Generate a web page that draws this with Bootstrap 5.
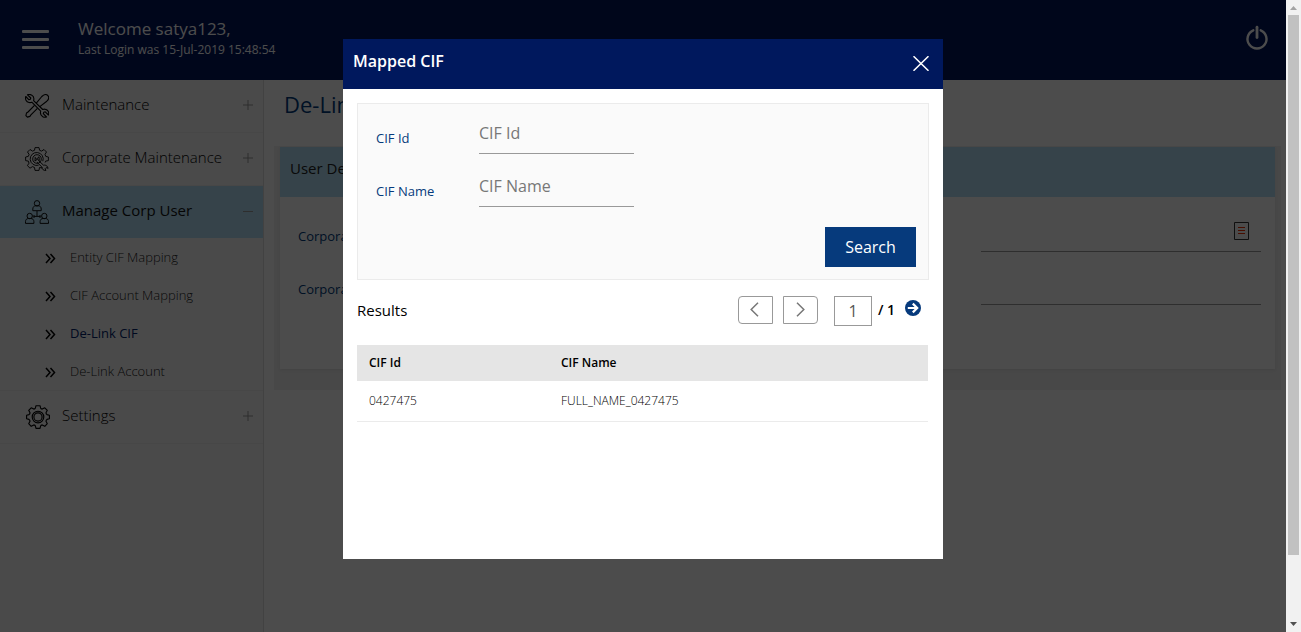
<!DOCTYPE html>
<html lang="en">
<head>
<meta charset="utf-8">
<title>De-Link CIF</title>
<link href="https://cdn.jsdelivr.net/npm/bootstrap@5.3.0/dist/css/bootstrap.min.css" rel="stylesheet">
<style>
body{font-family:"Open Sans",sans-serif;font-size:13px;height:632px;overflow:hidden;background:#fff}
svg{display:block;flex:none}
.topbar{height:80px;background:#00145c;color:#fff;padding:0 17px 0 22px}
.hello{font-size:17px;line-height:22px;margin-top:-4px;padding-bottom:1px}
.last-login{font-size:12px;line-height:18px}
.side{width:264px;background:#f7f7f7;border-right:1px solid #ddd}
.side-item{height:53px;padding:0 10px 4px 25px;border-bottom:1px solid #ededed;font-size:15px;font-weight:300;color:#000}
.side-item svg.pic{width:24px;height:24px;margin:4px 13px 0 0}
.side-item svg.sign{margin-top:2px}
.side-item svg.gear{margin:4px 12px 0 1px}
.side-item.selected{background:#b5e1f7;font-weight:400;border-color:#b5e1f7;height:52px;padding-bottom:2px;margin-bottom:1px;color:#111}
.side-item.selected svg.pic{margin-top:2px}
.side-item.selected svg.sign{margin-top:0}
.sub-item{height:38px;padding-left:45px;gap:14px;font-weight:300;color:#222}
.sub-item svg{color:#000;margin-top:1px}
.sub-item.current{font-weight:400;color:#00246b}
.sub-item.last-sub{border-bottom:1px solid #ededed}
.stroke{fill:none;stroke:currentColor}
.page-title{font-size:22px;line-height:30px;color:#003a7c;padding:9px 0 0 10px;height:66px}
.panel-outer{background:#f0f0f0;padding:1px 6px 21px;height:244px}
.panel-in{background:#fff;height:222px;box-shadow:0 1px 3px rgba(0,0,0,.08)}
.panel-head{height:50px;background:#b5e1f7;padding:9px 10px;font-size:15px;line-height:24px;color:#222}
.panel-row{height:53px;padding:0 14px 0 18px;color:#003a7c}
.panel-row .lbl{width:683px;padding-top:27px;line-height:24px}
.panel-row .val{height:55px;border-bottom:1px solid #999;padding:0 12px 11px 0}
.dim{background:rgba(0,0,0,.7);z-index:5}
.dialog{z-index:6;left:343px;top:39px;width:600px;height:520px;background:#fff}
.dialog-head{height:50px;background:#00185d;color:#fff;font-size:16px;font-weight:600;padding:0 14px 0 10px}
.dialog-head span{margin-top:-6px}
.search-box{height:177px;width:572px;background:#fafafa;border:1px solid #ebebeb;padding:0 12px 0 18px}
.frow{height:53px;color:#063a7c}
.frow label{width:103px;padding-top:22px;line-height:24px}
.frow input{width:155px;height:50px;border:0;border-bottom:1px solid #999;border-radius:0;background:none;padding:8px 0 0;font-size:16px;color:#777;outline:0}
.frow input::placeholder{color:#777;opacity:1}
.btn-search{width:91px;height:40px;background:#063a7c;color:#fff;border:0;border-radius:0;font-size:16px;padding:0}
.pg{width:35px;height:28px;border:1px solid #999;color:#777;background:#fff}
.pg svg{margin:-1px 2px 0 0}
.pg.prev{border-radius:4px 0 0 4px}
.pg.next{border-radius:0 4px 4px 0;margin-left:10px}
.pg.next svg{margin-right:0}
.pgno{width:38px;height:30px;border:1px solid #999;margin-left:16px;font-size:16px;color:#555}
.res-table{width:571px;font-size:12px}
.res-head{height:36px;background:#e5e5e5;font-weight:600;color:#000}
.res-line{height:41px;border-bottom:1px solid #ebebeb;font-weight:300;color:#000}
.c1{width:192px;padding-left:12px}
.c2{padding-left:12px}
.scrollbar{width:15px;background:#f1f1f1;height:632px}
.thumb{width:11px;height:540px;background:#c1c1c1}
</style>
</head>
<body>
<div class="d-flex h-100">
 <div class="position-relative flex-grow-1 h-100 overflow-hidden">
  <header class="topbar d-flex align-items-center">
   <svg width="27" height="20" viewBox="0 0 27 20" fill="#fff" style="margin-top:-2px"><rect y="1" width="27" height="3" rx="1"/><rect y="9" width="27" height="3" rx="1"/><rect y="17" width="27" height="3" rx="1"/></svg>
   <div class="flex-grow-1" style="margin-left:29px"><div class="hello">Welcome satya123,</div><div class="last-login">Last Login was 15-Jul-2019 15:48:54</div></div>
   <svg width="24" height="26" viewBox="0 0 24 26" fill="none" stroke="#fff" stroke-width="2.400" stroke-linecap="round" style="margin-top:-5px"><path d="M8.300 5.300A9.500 9.500 0 1 0 15.700 5.300"/><path d="M12 2.200V12.500" stroke-width="2.800"/></svg>
  </header>
  <div class="d-flex" style="height:552px">
   <nav class="side flex-shrink-0">
    <div class="side-item d-flex align-items-center">
     <svg class="pic stroke" viewBox="0 0 24 24" stroke-width="1.100" stroke-linejoin="round"><path d="M2.500.8 5.800 4 5.300 5.300 4 5.800.8 2.500C0 5 1 8 4 8.500c1 .2 2 .1 2.800-.3l8.900 8.900c-.6 2 .2 4.500 2.100 5.600 1.300.7 2.500.7 3.700.3l-3.200-3.300.5-1.400 1.400-.5L23.500 21c.8-2.500-.4-4.900-2.700-5.600-1.100-.4-2.100-.3-3.100.1L8.600 6.600C9.200 4.500 8.500 2 6.500 1 5.200.3 3.700.3 2.500.8z"/><path d="M11.300 9.200 16.800 2.500c2-2 4.500-2.300 6-1 1.300 1.500 1 3.800-1 5.700l-7 5.400M9.500 11.400 3 18l-1.500 1-.6 2.600 1.500 1.500 2.500-.7 1-1.500 6.500-6.600"/></svg>
     <span class="flex-grow-1">Maintenance</span><svg class="sign" width="10" height="10" viewBox="0 0 10 10" stroke="#999"><path d="M0 5H10M5 0V10"/></svg></div>
    <div class="side-item d-flex align-items-center">
     <svg class="pic stroke" viewBox="0 0 24 24" stroke-width=".9" stroke-linejoin="round"><path d="M17.500 21 14.500 20.500 14 23.400H10L9.500 20.500 7.500 19.600 5 21.200 2.400 18.600 4 16.200 3.300 14.100.6 13.600V10l2.700-.6.8-2L2.500 5 5 2.500l2.500 1.600 2-.8L10 .6h4l.6 2.700 2 .8L19 2.500 21.500 5 20 7.400l.8 2 2.600.6v3.600l-2.700.5-.6 1.400"/><path d="M17.800 14.200A6.500 6.500 0 1 0 13.600 18.200"/><circle cx="12" cy="12" r="4.300"/><path d="m10 14 .2-3.600 1.300 1.800L14 9.800l.3 3.800-2-1.300zM13.500 13.500l5 4.700c1.600-.3 3.200.1 4 1.600l.6 1.500-2-.6-1 1 .8 1.800c-2.200.2-4-1.200-4-3.500L12 15.200"/></svg>
     <span class="flex-grow-1">Corporate Maintenance</span><svg class="sign" width="10" height="10" viewBox="0 0 10 10" stroke="#999"><path d="M0 5H10M5 0V10"/></svg></div>
    <div class="side-item selected d-flex align-items-center">
     <svg class="pic stroke" viewBox="0 0 24 24" stroke-width="1"><g id="person"><circle cx="12" cy="3.300" r="2.700"/><path d="M7.800 10.700V9c0-2 1.200-3.200 3-3.200h2.400c1.800 0 3 1.200 3 3.200v1.700z"/></g><use href="#person" x="-7.300" y="12.700"/><use href="#person" x="7.300" y="12.700"/><path d="M12 11v5M8.500 16.400h7M9 15v3M15 15v3"/></svg>
     <span class="flex-grow-1">Manage Corp User</span><svg class="sign" width="10" height="10" viewBox="0 0 10 10" stroke="#999"><path d="M0 5.500H10"/></svg></div>
    <div class="sub-item d-flex align-items-center"><svg class="stroke" width="11" height="11" viewBox="0 0 11 11" stroke-width="1.500"><path d="m1 1 4 4.500-4 4.500M5.500 1l4 4.500-4 4.500"/></svg><span>Entity CIF Mapping</span></div>
    <div class="sub-item d-flex align-items-center"><svg class="stroke" width="11" height="11" viewBox="0 0 11 11" stroke-width="1.500"><path d="m1 1 4 4.500-4 4.500M5.500 1l4 4.500-4 4.500"/></svg><span>CIF Account Mapping</span></div>
    <div class="sub-item current d-flex align-items-center"><svg class="stroke" width="11" height="11" viewBox="0 0 11 11" stroke-width="1.500"><path d="m1 1 4 4.500-4 4.500M5.500 1l4 4.500-4 4.500"/></svg><span>De-Link CIF</span></div>
    <div class="sub-item last-sub d-flex align-items-center"><svg class="stroke" width="11" height="11" viewBox="0 0 11 11" stroke-width="1.500"><path d="m1 1 4 4.500-4 4.500M5.500 1l4 4.500-4 4.500"/></svg><span>De-Link Account</span></div>
    <div class="side-item d-flex align-items-center">
     <svg class="pic gear stroke" viewBox="0 0 24 24" stroke-width="1.150" stroke-linejoin="round"><path d="M10 .7h4l.6 2.200Q15 3.800 16.200 4.100L18.800 2.800 21.300 5.300 20 7.700Q20 9 21 9.600L23.400 10.200V13.800L21 14.400Q20 15 20 16.300L21.300 18.700 18.800 21.300 16.200 19.900Q15 20.200 14.600 21.100L14 23.300H10L9.400 21.100Q9 20.200 7.800 19.900L5.200 21.300 2.700 18.700 4 16.300Q4 15 3 14.400L.6 13.800V10.200L3 9.600Q4 9 4 7.700L2.700 5.300 5.200 2.800 7.800 4.100Q9 3.800 9.400 2.900z"/><circle cx="12" cy="12" r="5.800"/><circle cx="12" cy="12" r="4.100"/></svg>
     <span class="flex-grow-1">Settings</span><svg class="sign" width="10" height="10" viewBox="0 0 10 10" stroke="#999"><path d="M0 5H10M5 0V10"/></svg></div>
   </nav>
   <main class="flex-grow-1" style="padding:0 5px 0 10px">
    <div class="page-title">De-Link CIF</div>
    <div class="panel-outer"><div class="panel-in">
     <div class="panel-head">User Details</div>
     <div class="panel-row d-flex"><div class="lbl">Corporate Id</div><div class="val flex-grow-1 d-flex justify-content-end align-items-end"><svg width="15" height="18" viewBox="0 0 15 18" fill="none"><path d="M.5.500h14v17H.5z" stroke="#333"/><path d="M4 5.500h7M4 8.500h7M4 11.500h7" stroke="#f03000"/></svg></div></div>
     <div class="panel-row d-flex"><div class="lbl">Corporate Name</div><div class="val flex-grow-1"></div></div>
    </div></div>
   </main>
  </div>
  <div class="dim position-absolute top-0 start-0 w-100 h-100"></div>
  <section class="dialog position-absolute" role="dialog">
   <div class="dialog-head d-flex align-items-center justify-content-between"><span>Mapped CIF</span><svg width="16" height="15" viewBox="0 0 16 15" fill="none" stroke="#fff" stroke-width="1.500" style="margin-top:-1px"><path d="M.5.200 15.500 14.800M15.500.200.5 14.800"/></svg></div>
   <div style="padding:14px 14px 0">
    <form class="search-box">
     <div class="frow d-flex"><label for="cid">CIF Id</label><input id="cid" placeholder="CIF Id"></div>
     <div class="frow d-flex"><label for="cname">CIF Name</label><input id="cname" placeholder="CIF Name"></div>
     <div class="d-flex justify-content-end" style="padding-top:17px"><button type="button" class="btn btn-search">Search</button></div>
    </form>
    <div class="d-flex align-items-start" style="height:65px;padding-top:16px">
     <div class="flex-grow-1 text-black" style="font-size:15px;line-height:28px">Results</div>
     <span class="pg prev d-flex align-items-center justify-content-center"><svg width="9" height="15" viewBox="0 0 9 15" class="stroke" stroke-width="1.500"><path d="M8 .8 1.200 7.500 8 14.200"/></svg></span>
     <span class="pg next d-flex align-items-center justify-content-center"><svg width="9" height="15" viewBox="0 0 9 15" class="stroke" stroke-width="1.500"><path d="M1 .8 7.800 7.500 1 14.200"/></svg></span>
     <span class="pgno d-flex align-items-center justify-content-center">1</span>
     <span class="text-black" style="font-size:14px;font-weight:600;line-height:28px;margin-left:6px;width:27px;white-space:nowrap">/ 1</span>
     <svg width="16" height="16" viewBox="0 0 16 16" style="margin:4px 8px 0 0"><circle cx="8" cy="8" r="8" fill="#063a7c"/><path d="M2.800 8h9M7.800 3.600 12.200 8 7.800 12.400" fill="none" stroke="#fff" stroke-width="2.200"/></svg>
    </div>
    <div class="res-table">
     <div class="res-head d-flex align-items-center"><div class="c1">CIF Id</div><div class="c2">CIF Name</div></div>
     <div class="res-line d-flex align-items-center"><div class="c1">0427475</div><div class="c2">FULL_NAME_0427475</div></div>
    </div>
   </div>
  </section>
 </div>
 <div class="scrollbar flex-shrink-0 d-flex flex-column align-items-center">
  <svg width="15" height="15" viewBox="0 0 15 15"><path d="M4 10 7.500 6 11 10z" fill="#a3a3a3"/></svg>
  <div class="thumb"></div>
  <svg class="mt-auto" width="15" height="15" viewBox="0 0 15 15"><path d="M4 5 7.500 9 11 5z" fill="#505050"/></svg>
 </div>
</div>
<script src="https://cdn.jsdelivr.net/npm/bootstrap@5.3.0/dist/js/bootstrap.bundle.min.js"></script>
</body>
</html>
